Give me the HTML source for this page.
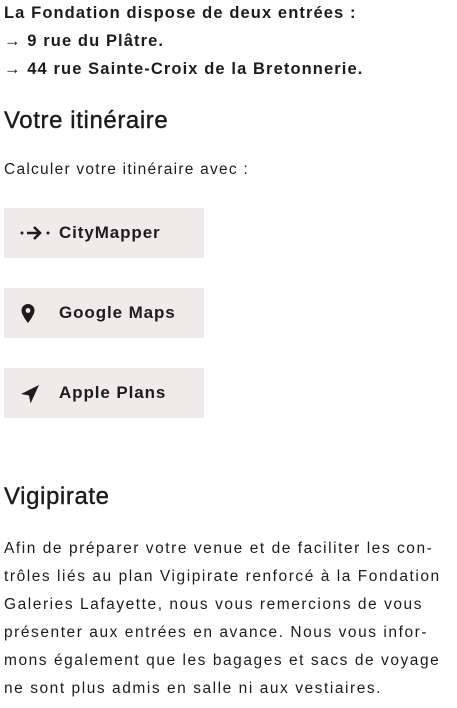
<!DOCTYPE html>
<html><head><meta charset="utf-8"><style>
body{margin:0;width:457px;height:708px;overflow:hidden;background:#fff;color:#1c1c1c;font-family:"Liberation Sans",sans-serif;}
.a{position:absolute;left:4px;white-space:nowrap}
.b{font-weight:bold;font-size:16.5px;line-height:28px;letter-spacing:1.1px}
h2{position:absolute;left:4px;margin:0;font-size:24px;font-weight:normal;letter-spacing:0.6px;-webkit-text-stroke:0.4px #1c1c1c}
.btn{position:absolute;left:4px;width:200px;height:50px;background:#eeebea;font-weight:bold;font-size:17px;letter-spacing:0.9px}
.btn span{position:absolute;left:55px;top:15px}
.btn svg{position:absolute;left:16px;top:15px}
p{position:absolute;left:4px;top:535px;margin:0;width:450px;font-size:15.5px;line-height:28px;letter-spacing:1.55px;white-space:nowrap}
</style></head><body>
<div class="a b" style="top:-1px">La Fondation dispose de deux entrées :<br>→ 9 rue du Plâtre.<br>→ 44 rue Sainte-Croix de la Bretonnerie.</div>
<h2 style="top:107px">Votre itinéraire</h2>
<div class="a" style="top:161px;font-size:15.5px;letter-spacing:1.25px">Calculer votre itinéraire avec :</div>
<div class="btn" style="top:208px"><svg width="32" height="20" viewBox="0 0 32 20"><circle cx="2" cy="10" r="1.5" fill="#1c1c1c"/><path d="M7 10h13M14 4l6 6-6 6" stroke="#1c1c1c" stroke-width="2.6" fill="none"/><circle cx="28" cy="10" r="1.5" fill="#1c1c1c"/></svg><span>CityMapper</span></div>
<div class="btn" style="top:288px"><svg width="20" height="22" viewBox="0 0 20 22"><path d="M8 1a6.5 6.5 0 0 0-6.5 6.5C1.5 12 8 20 8 20s6.5-8 6.5-12.5A6.5 6.5 0 0 0 8 1z" fill="#1c1c1c"/><circle cx="8" cy="7.5" r="2.4" fill="#eeebea"/></svg><span>Google Maps</span></div>
<div class="btn" style="top:368px"><svg width="22" height="22" viewBox="0 0 22 22"><path d="M19 2L1 11l8 1.5 1.5 8z" fill="#1c1c1c"/></svg><span>Apple Plans</span></div>
<h2 style="top:483px">Vigipirate</h2>
<p>Afin de préparer votre venue et de faciliter les con-<br>trôles liés au plan Vigipirate renforcé à la Fondation<br>Galeries Lafayette, nous vous remercions de vous<br>présenter aux entrées en avance. Nous vous infor-<br>mons également que les bagages et sacs de voyage<br>ne sont plus admis en salle ni aux vestiaires.</p>
</body></html>
